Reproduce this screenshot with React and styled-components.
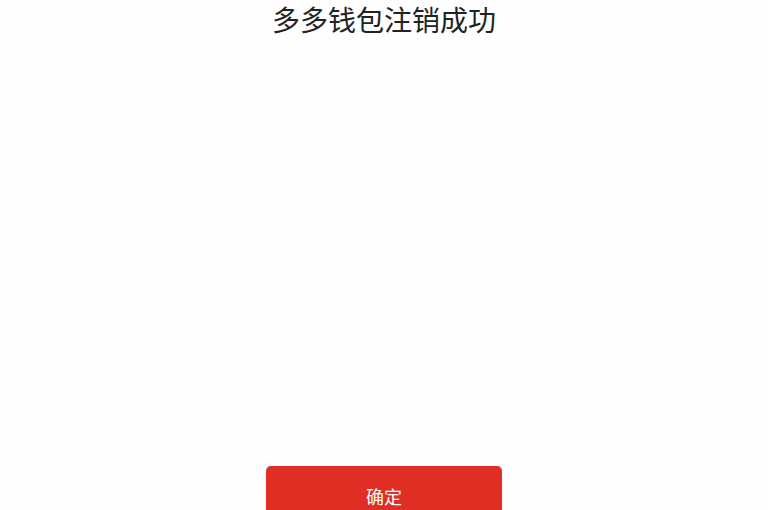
import styled, { createGlobalStyle } from 'styled-components';

const GlobalStyle = createGlobalStyle`
html, body {
  margin: 0;
  padding: 0;
  background: #fefefe;
}
body {
  font-family: "Noto Sans CJK SC", "Noto Sans", sans-serif;
}
`

const Page = styled.div`
width: 768px;
height: 510px;
overflow: hidden;
display: flex;
flex-direction: column;
align-items: center;
background: #fefefe;
`

const Title = styled.h1`
margin: 0;
font-size: 28px;
line-height: 38px;
font-weight: 400;
color: #222;
letter-spacing: 0;
`

const Spacer = styled.div`
flex: 1;
`

const Button = styled.button`
width: 236px;
height: 60px;
margin-bottom: -16px;
border: none;
border-radius: 5px;
background-color: #e02e24;
color: #fff;
font-family: inherit;
font-size: 18px;
padding: 0;
cursor: pointer;
`

const App = () => {
    return (
        <Page>
            <GlobalStyle />
            <Title>多多钱包注销成功</Title>
            <Spacer />
            <Button>确定</Button>
        </Page>
    );
}

export default App;
